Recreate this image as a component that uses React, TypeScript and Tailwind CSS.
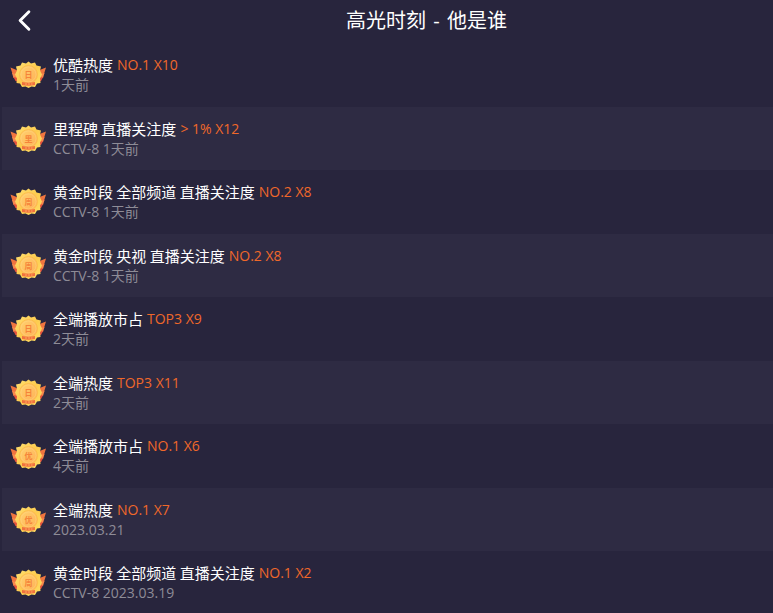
import React from "react";
import { ChevronLeft } from "lucide-react";

type Moment = {
  medal: "日" | "周" | "里" | "优";
  title: string;
  record: string;
  meta: string;
};

const moments: Moment[] = [
  { medal: "日", title: "优酷热度", record: "NO.1 X10", meta: "1天前" },
  { medal: "里", title: "里程碑 直播关注度", record: "> 1% X12", meta: "CCTV-8 1天前" },
  { medal: "周", title: "黄金时段 全部频道 直播关注度", record: "NO.2 X8", meta: "CCTV-8 1天前" },
  { medal: "周", title: "黄金时段 央视 直播关注度", record: "NO.2 X8", meta: "CCTV-8 1天前" },
  { medal: "日", title: "全端播放市占", record: "TOP3 X9", meta: "2天前" },
  { medal: "日", title: "全端热度", record: "TOP3 X11", meta: "2天前" },
  { medal: "优", title: "全端播放市占", record: "NO.1 X6", meta: "4天前" },
  { medal: "优", title: "全端热度", record: "NO.1 X7", meta: "2023.03.21" },
  { medal: "周", title: "黄金时段 全部频道 直播关注度", record: "NO.1 X2", meta: "CCTV-8 2023.03.19" },
];

const Medal: React.FC<{ label: string }> = ({ label }) => (
  <svg viewBox="0 0 38 30" className="h-[30px] w-[38px] shrink-0" aria-hidden="true">
    <defs>
      <linearGradient id="medal-star" x1="0" y1="0" x2="1" y2="1">
        <stop offset="0" stopColor="#ffe071" />
        <stop offset="0.5" stopColor="#fdcb4f" />
        <stop offset="1" stopColor="#ffe066" />
      </linearGradient>
      <linearGradient id="medal-disc" x1="0" y1="0" x2="1" y2="1">
        <stop offset="0" stopColor="#ffd270" />
        <stop offset="1" stopColor="#ffb055" />
      </linearGradient>
    </defs>
    {/* wings */}
    <path d="M1.500 7.500 L10 11 V16 L3.500 14 Z M37 7.500 L28 11 V16 L35 14 Z" fill="#f0753f" />
    <path d="M3 13 L10 15 V19 L4.500 18 Z M35.500 13 L28 15 V19 L34 18 Z" fill="#f98a4d" />
    <path d="M4.500 17 L10 18 V22 L6.500 21 Z M34 17 L28 18 V22 L32 21 Z" fill="#e5533c" />
    {/* star */}
    <path
      d="M19.500 1.500 L22 3.500 L26 2.500 L27.500 5.500 L32 6.500 L31 10.500 L33 14.500 L31 18.500 L31.500 23 L28 23.500 L26 27 L22.500 26.500 L19.500 28 L16.500 26.500 L13 27 L11 23.500 L7.500 23 L8 18.500 L6 14.500 L8 10.500 L7 6.500 L11.500 5.500 L13 2.500 L17 3.500 Z"
      fill="url(#medal-star)"
    />
    <circle cx="19.500" cy="14.500" r="9" fill="url(#medal-disc)" stroke="#fdb94a" strokeWidth="0.800" />
    <circle cx="19.500" cy="14.500" r="7.500" fill="none" stroke="#ffdc88" strokeWidth="0.400" />
    <text
      x="19.500"
      y="17.500"
      textAnchor="middle"
      fontSize="8"
      fontWeight="700"
      fill="#f5843a"
      className="font-['Noto_Sans_CJK_SC',sans-serif]"
    >
      {label}
    </text>
    {/* ribbon */}
    <path d="M13 22 Q19.500 23.500 26 22 V25 Q19.500 26.500 13 25 Z" fill="#f0713f" />
    <path d="M16 24 H23.500" stroke="#ffa95c" strokeDasharray="2 1" />
  </svg>
);

const App: React.FC = () => {
  return (
    <div className="min-h-screen bg-[#28253d] font-['Open_Sans','Noto_Sans_CJK_SC',sans-serif]">
      <header className="grid h-[43px] grid-cols-[80px_1fr] items-center pb-0.5">
        <button type="button" aria-label="返回" className="flex h-full items-center pl-[7px] text-white">
          <ChevronLeft size={35} strokeWidth={2} />
        </button>
        <h1 className="text-center text-xl text-white">
          高光时刻<span className="px-0.5"> - </span>他是谁
        </h1>
      </header>

      <ul className="ml-0.5">
        {moments.map((item, index) => (
          <li
            key={index}
            className="flex items-center gap-1.5 pl-[7px] odd:h-16 even:h-[63px] even:bg-[#2e2b43]"
          >
            <Medal label={item.medal} />
            <div>
              <p className="flex gap-1 leading-5">
                <span className="font-['Noto_Sans_CJK_SC',sans-serif] text-[15px] text-white">{item.title}</span>
                <span className="text-sm leading-5 text-[#f0682a]">{item.record}</span>
              </p>
              <p className="text-sm leading-5 text-[#8e8c97]">{item.meta}</p>
            </div>
          </li>
        ))}
      </ul>
    </div>
  );
};

export default App;
